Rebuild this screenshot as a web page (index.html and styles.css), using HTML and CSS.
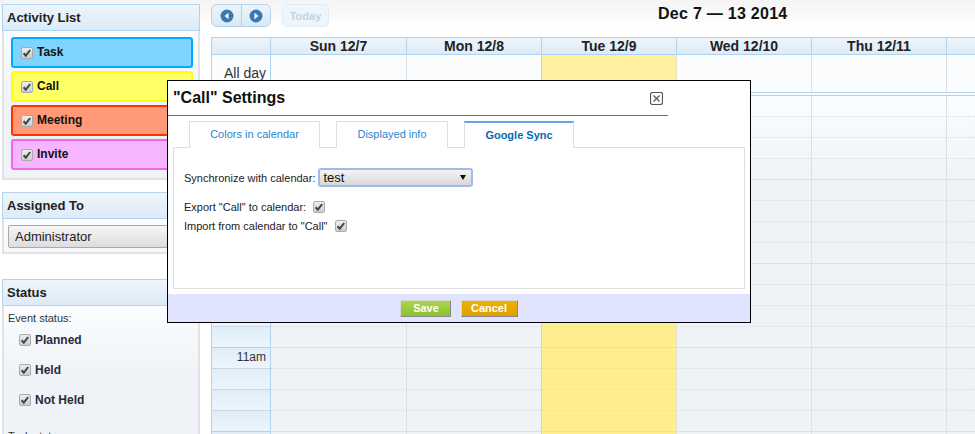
FILE: index.html
```html
<!DOCTYPE html>
<html>
  <head>
    <title>Calendar</title>
    <link rel="stylesheet" href="styles.css">
  </head>
  <body>
    <div class="page">
      <div class="sidebar">
        <div class="panel panel-activity">
          <div class="panel-head">Activity List</div>
          <div class="panel-body activity-list">
            <label class="activity task"><input class="check" type="checkbox" checked>Task</label>
            <label class="activity call"><input class="check" type="checkbox" checked>Call</label>
            <label class="activity meeting"><input class="check" type="checkbox" checked>Meeting</label>
            <label class="activity invite"><input class="check" type="checkbox" checked>Invite</label>
          </div>
        </div>
        <div class="panel panel-assigned">
          <div class="panel-head">Assigned To</div>
          <div class="panel-body assigned-body">
            <select class="assigned-select"><option>Administrator</option></select>
          </div>
        </div>
        <div class="panel panel-status">
          <div class="panel-head">Status</div>
          <div class="panel-body status-body">
            <div class="status-title">Event status:</div>
            <label class="status-item"><input class="check" type="checkbox" checked>Planned</label>
            <label class="status-item"><input class="check" type="checkbox" checked>Held</label>
            <label class="status-item"><input class="check" type="checkbox" checked>Not Held</label>
            <div class="status-title status-task">Task status:</div>
          </div>
        </div>
      </div>

      <div class="main">
        <div class="toolbar">
          <div class="nav-group">
            <button class="nav-btn">
              <svg width="14" height="14" viewBox="0 0 14 14"><circle cx="7" cy="7" r="6.5" fill="#3a7ab0"/><path d="M8.5 3.8v6.4L4.6 7z" fill="#fff"/></svg>
            </button>
            <button class="nav-btn">
              <svg width="14" height="14" viewBox="0 0 14 14"><circle cx="7" cy="7" r="6.5" fill="#3a7ab0"/><path d="M5.5 3.8v6.4L9.4 7z" fill="#fff"/></svg>
            </button>
          </div>
          <button class="today-btn">Today</button>
          <div class="range-title">Dec 7 — 13 2014</div>
        </div>

        <table class="week">
          <colgroup>
            <col class="col-time"><col class="col-first"><col class="col-day"><col class="col-day"><col class="col-day"><col class="col-day"><col class="col-day">
          </colgroup>
          <thead>
            <tr class="head-row">
              <th class="time-head"></th><th>Sun 12/7</th><th>Mon 12/8</th><th>Tue 12/9</th><th>Wed 12/10</th><th>Thu 12/11</th><th></th>
            </tr>
            <tr class="allday-row">
              <td class="time">All day</td><td></td><td></td><td class="today"></td><td></td><td></td><td></td>
            </tr>
          </thead>
          <tbody>
            <tr><td class="time"></td><td></td><td></td><td class="today"></td><td></td><td></td><td></td></tr>
            <tr><td class="time"></td><td></td><td></td><td class="today"></td><td></td><td></td><td></td></tr>
            <tr><td class="time"></td><td></td><td></td><td class="today"></td><td></td><td></td><td></td></tr>
            <tr class="hour-end"><td class="time"></td><td></td><td></td><td class="today"></td><td></td><td></td><td></td></tr>
            <tr><td class="time"></td><td></td><td></td><td class="today"></td><td></td><td></td><td></td></tr>
            <tr><td class="time"></td><td></td><td></td><td class="today"></td><td></td><td></td><td></td></tr>
            <tr><td class="time"></td><td></td><td></td><td class="today"></td><td></td><td></td><td></td></tr>
            <tr class="hour-end"><td class="time"></td><td></td><td></td><td class="today"></td><td></td><td></td><td></td></tr>
            <tr><td class="time"></td><td></td><td></td><td class="today"></td><td></td><td></td><td></td></tr>
            <tr><td class="time"></td><td></td><td></td><td class="today"></td><td></td><td></td><td></td></tr>
            <tr><td class="time"></td><td></td><td></td><td class="today"></td><td></td><td></td><td></td></tr>
            <tr class="hour-end"><td class="time"></td><td></td><td></td><td class="today"></td><td></td><td></td><td></td></tr>
            <tr><td class="time">11am</td><td></td><td></td><td class="today"></td><td></td><td></td><td></td></tr>
            <tr><td class="time"></td><td></td><td></td><td class="today"></td><td></td><td></td><td></td></tr>
            <tr><td class="time"></td><td></td><td></td><td class="today"></td><td></td><td></td><td></td></tr>
            <tr class="hour-end"><td class="time"></td><td></td><td></td><td class="today"></td><td></td><td></td><td></td></tr>
            <tr><td class="time"></td><td></td><td></td><td class="today"></td><td></td><td></td><td></td></tr>
          </tbody>
        </table>
      </div>
    </div>

    <div class="modal">
      <div class="modal-head">
        <h2 class="modal-title">"Call" Settings</h2>
        <svg class="modal-close" width="13" height="13" viewBox="0 0 13 13"><rect x="0.5" y="0.5" width="12" height="12" rx="2" fill="#fff" stroke="#555" stroke-width="1.2"/><path d="M3.5 3.5l6 6M9.5 3.5l-6 6" stroke="#555" stroke-width="1.2" fill="none"/></svg>
      </div>
      <div class="tabs">
        <div class="tab tab-colors">Colors in calendar</div>
        <div class="tab tab-info">Displayed info</div>
        <div class="tab tab-google">Google Sync</div>
      </div>
      <div class="tab-content">
        <div class="sync-row">
          <span>Synchronize with calendar:</span>
          <select class="sync-select"><option>test</option></select>
        </div>
        <label class="option-row option-export">Export "Call" to calendar:<input class="check" type="checkbox" checked></label>
        <label class="option-row option-import">Import from calendar to "Call"<input class="check" type="checkbox" checked></label>
      </div>
      <div class="modal-foot">
        <button class="foot-btn save">Save</button>
        <button class="foot-btn cancel">Cancel</button>
      </div>
    </div>
  </body>
</html>
```

FILE: styles.css
```css
html,
body {
  margin: 0;
  height: 434px;
  overflow: hidden;
}
body {
  font-family: "Liberation Sans", Arial, sans-serif;
  font-size: 11px;
  color: #222;
  background: linear-gradient(#f4f4f4, #fff 28px);
}
.page {
  display: flex;
  width: 1400px;
}

/* sidebar */
.sidebar {
  width: 198px;
  margin: 4px 0 0 2px;
  flex: none;
}
.panel-assigned {
  margin-top: 12px;
}
.panel-status {
  margin-top: 25px;
}
.panel-head {
  height: 27px;
  box-sizing: border-box;
  border: 1px solid #b2d3ef;
  padding-left: 4px;
  font-size: 13px;
  font-weight: bold;
  line-height: 25px;
  background: linear-gradient(#eef5fb, #dcebf7);
}
.panel-body {
  box-sizing: border-box;
  border: 2px solid #e2e2e2;
  border-top: none;
  background: linear-gradient(#fbfdff, #eff3f7 70px);
}
.activity-list {
  height: 149px;
  padding: 6px 5px 0 7px;
}
.activity {
  display: flex;
  align-items: center;
  height: 31px;
  box-sizing: border-box;
  margin-bottom: 3px;
  border: 2px solid;
  border-radius: 3px;
  padding: 0 0 2px 8px;
  font-size: 12px;
  font-weight: bold;
  color: #111;
}
.activity .check {
  margin: 2px 4px 0 0;
}
.task {
  background: #7fd4ff;
  border-color: #00aaff;
}
.call {
  background: #ffff66;
  border-color: #ffff00;
}
.meeting {
  background: #ff9977;
  border-color: #ff3300;
}
.invite {
  background: #f5b5ff;
  border-color: #f066ee;
}
.check {
  appearance: none;
  flex: none;
  width: 12px;
  height: 12px;
  margin: 0;
  border: 1px solid #aaa;
  border-radius: 2px;
  background: url("data:image/svg+xml,%3Csvg xmlns='http://www.w3.org/2000/svg' viewBox='0 0 12 12'%3E%3Cpath d='M2.6 6.2l2.2 2.4 4.4-5.6' fill='none' stroke='%23444' stroke-width='2'/%3E%3C/svg%3E") center / 12px 12px no-repeat, linear-gradient(#eee, #ccc);
}
.assigned-body {
  height: 35px;
  padding: 6px 0 0 4px;
}
.assigned-select {
  appearance: none;
  width: 187px;
  height: 23px;
  border: 1px solid #aaa;
  border-radius: 2px;
  padding-left: 6px;
  font-family: "Liberation Sans", Arial, sans-serif;
  font-size: 13px;
  color: #222;
  background: linear-gradient(#f6f6f6, #ddd);
}
.status-body {
  height: 200px;
  padding: 4px 0 0 4px;
}
.status-title {
  height: 16px;
  line-height: 16px;
  color: #333;
}
.status-item {
  display: flex;
  align-items: center;
  height: 30px;
  padding-left: 11px;
  font-size: 12px;
  font-weight: bold;
  color: #2a2a3a;
}
.status-item .check {
  margin-right: 4px;
}
.status-item:first-of-type {
  margin-top: -1px;
}
.status-task {
  margin-top: 13px;
}

/* calendar */
.main {
  margin-left: 11px;
  flex: none;
}
.toolbar {
  display: flex;
  align-items: flex-start;
  height: 33px;
  padding-top: 4px;
}
.nav-group {
  display: flex;
  height: 23px;
  box-sizing: border-box;
  border: 1px solid #b2d3ef;
  border-radius: 6px;
  background: linear-gradient(#eef5fb, #d9e9f6);
}
.nav-btn {
  display: flex;
  align-items: center;
  justify-content: center;
  width: 29px;
  padding: 0;
  border: none;
  background: none;
}
.nav-btn + .nav-btn {
  border-left: 1px solid #b2d3ef;
}
.today-btn {
  width: 47px;
  height: 23px;
  margin-left: 11px;
  padding: 0;
  border: 1px solid #e0ecf6;
  border-radius: 5px;
  font-family: "Liberation Sans", Arial, sans-serif;
  font-size: 11px;
  font-weight: bold;
  color: #c3d3e0;
  background: #eff6fb;
}
.range-title {
  margin: 1px 0 0 329px;
  font-size: 16px;
  font-weight: bold;
  letter-spacing: 0.27px;
  line-height: 18px;
  color: #111;
}
.week {
  table-layout: fixed;
  width: 869px;
  border-collapse: separate;
  border-spacing: 0;
}
.col-time {
  width: 59px;
}
.col-first {
  width: 136px;
}
.col-day {
  width: 135px;
}
.week td,
.week th {
  box-sizing: border-box;
  padding: 0;
  border-left: 1px solid #dcdfe3;
}
.head-row th {
  height: 18px;
  border-top: 1px solid #b2d3ef;
  border-bottom: 1px solid #b2d3ef;
  border-left-color: #b2d3ef;
  font-size: 14px;
  line-height: 15px;
  color: #222;
  background: linear-gradient(#eef5fb, #dcebf7);
}
.allday-row td {
  height: 41px;
  border-bottom: 4px double #b2d3ef;
  background: #fbfcfe;
  vertical-align: top;
}
.allday-row .time {
  padding-top: 10px;
  font-size: 14px;
  line-height: 16px;
  color: #444;
}
.week tbody {
  background: linear-gradient(#fbfdff, #eff3f7 84px);
}
.week tbody td {
  height: 21px;
  border-bottom: 1px dotted #d8dbdf;
  font-size: 12px;
  line-height: 14px;
  vertical-align: top;
}
.week tbody .hour-end td {
  border-bottom: 1px solid #dcdfe3;
}
.week .time {
  padding-right: 4px;
  border-left-color: #b2d3ef;
  text-align: right;
  color: #333;
}
.week tbody .time {
  padding-top: 2px;
  border-bottom-color: #a8c8e0;
  background: linear-gradient(#e0edf8, #ecf5fc);
}
.week tbody .hour-end .time {
  border-bottom-color: #b2d3ef;
}
.week .time + td {
  border-left-color: #b2d3ef;
}
.week .today {
  border-left-color: #f5d94e;
  background: #ffee90;
}
.week .allday-row .today {
  background: #fff0a0;
}
.week .today + td {
  border-left-color: #e4e2c8;
}

/* settings dialog, floats over the calendar */
.modal {
  position: absolute;
  left: 167px;
  top: 80px;
  width: 584px;
  height: 243px;
  box-sizing: border-box;
  border: 1px solid #000;
  background: #fff;
}
.modal-head {
  display: flex;
  align-items: center;
  justify-content: space-between;
  width: 500px;
  height: 35px;
  box-sizing: border-box;
  border-bottom: 1px solid #73734f;
  padding: 0 5px;
}
.modal-title {
  margin: 0 0 2px;
  font-size: 16px;
  line-height: 31px;
  color: #111;
}
.modal-close {
  flex: none;
}
.tabs {
  display: flex;
  height: 27px;
  margin-top: 5px;
  padding-left: 21px;
}
.tab {
  position: relative;
  z-index: 1;
  height: 27px;
  box-sizing: border-box;
  border: 1px solid #dedede;
  border-bottom: none;
  font-size: 11px;
  line-height: 25px;
  text-align: center;
  color: #2a85d0;
  background: #fff;
}
.tab-colors {
  width: 131px;
}
.tab-info {
  width: 112px;
  margin-left: 16px;
}
.tab-google {
  width: 110px;
  margin-left: 16px;
  border-top: 2px solid #68a5e6;
  font-weight: bold;
  color: #0a6bb0;
}
.tab-content {
  height: 142px;
  box-sizing: border-box;
  margin: -1px 5px 0;
  border: 1px solid #dedede;
  padding: 20px 10px 0;
  color: #222;
}
.sync-row {
  display: flex;
  align-items: center;
  gap: 3px;
  height: 19px;
}
.sync-select {
  appearance: none;
  width: 155px;
  height: 19px;
  border: 2px solid #9dbce8;
  border-radius: 3px;
  padding-left: 3px;
  font-family: "Liberation Sans", Arial, sans-serif;
  font-size: 13px;
  color: #111;
  background: url("data:image/svg+xml,%3Csvg xmlns='http://www.w3.org/2000/svg' viewBox='0 0 6 5'%3E%3Cpath d='M0 0h6L3 5z' fill='%23111'/%3E%3C/svg%3E") right 5px center / 6px 5px no-repeat, linear-gradient(#f4f4f4, #d8d8d8);
}
.option-row {
  display: flex;
  align-items: center;
  height: 19px;
}
.option-export {
  margin-top: 10px;
}
.option-export .check {
  margin-left: 7px;
}
.option-import .check {
  margin-left: 7px;
}
.modal-foot {
  display: flex;
  gap: 10px;
  justify-content: center;
  align-items: flex-start;
  height: 28px;
  box-sizing: border-box;
  margin-top: 5px;
  padding: 6px 1px 0 0;
  background: #e0e4ff;
}
.foot-btn {
  height: 17px;
  padding: 0;
  border: 1px solid;
  border-color: #d8d8d8 #8a8a8a #8a8a8a #d8d8d8;
  font-family: "Liberation Sans", Arial, sans-serif;
  font-size: 11px;
  font-weight: bold;
  line-height: 15px;
  color: #fff;
}
.save {
  width: 51px;
  padding-left: 2px;
  background: linear-gradient(#a8d84a, #8cc030);
}
.cancel {
  width: 57px;
  background: linear-gradient(#f0b000, #dfa000);
}
```
